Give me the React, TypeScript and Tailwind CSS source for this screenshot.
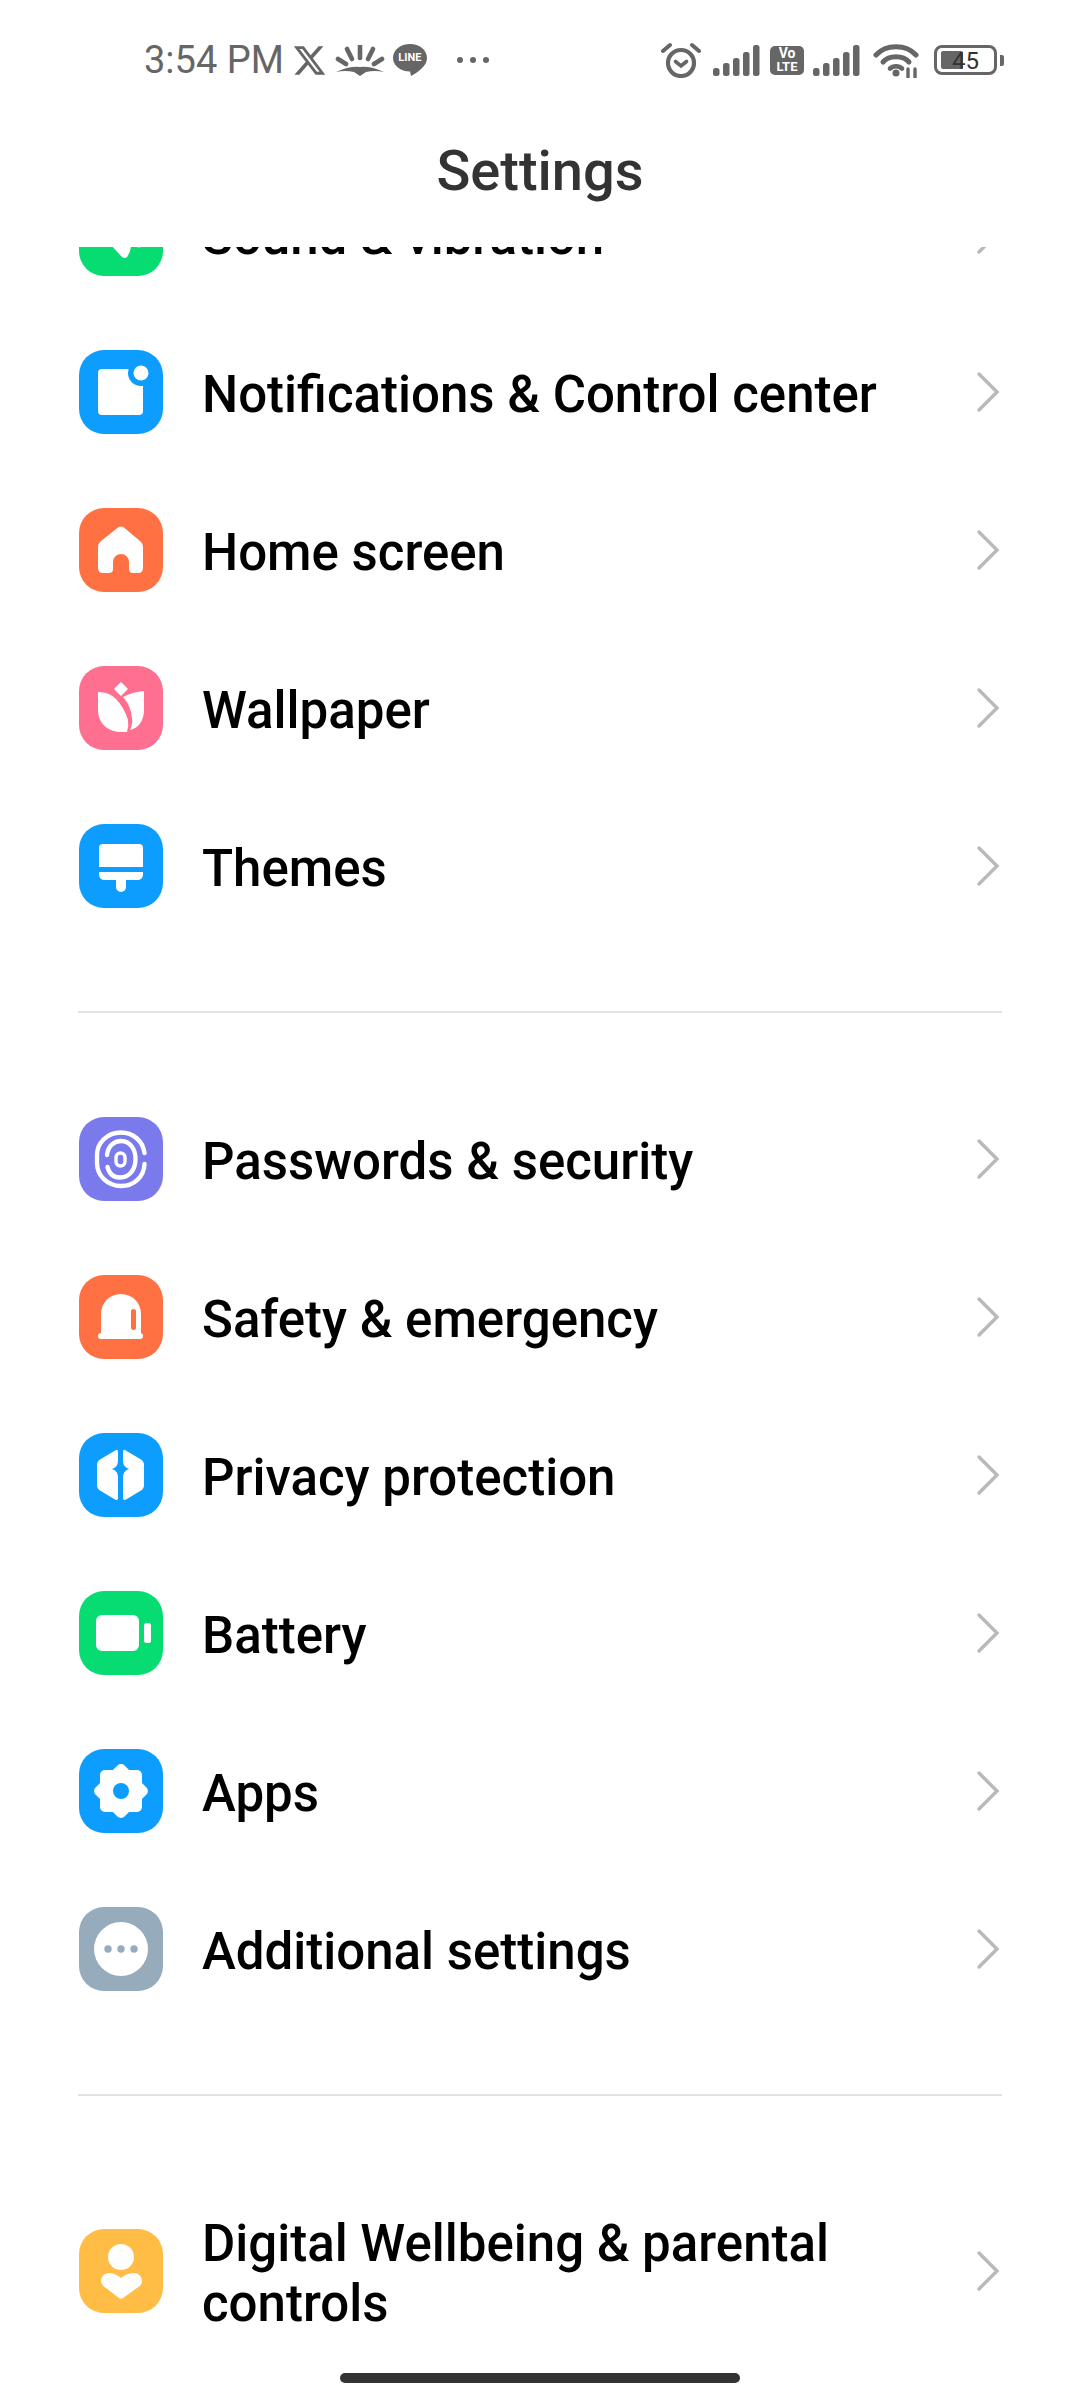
import React from "react";
import { FaXTwitter } from "react-icons/fa6";

const W = "#ffffff";

function Ico({ bg, children }: { bg: string; children: React.ReactNode }) {
  return (
    <div className={`w-[84px] h-[84px] rounded-[25px] shrink-0 overflow-hidden ${bg}`}>
      <svg width="84" height="84" viewBox="0 0 84 84">{children}</svg>
    </div>
  );
}

const Sound = () => (
  <Ico bg="bg-[#07dc73]">
    <path d="M31 52 L43 65 Q46 67 48 65 Q52 60 53 48 Z" fill={W} />
    <circle cx="60" cy="50" r="5.5" fill={W} />
  </Ico>
);
const Notif = () => (
  <Ico bg="bg-[#0d9dff]">
    <rect x="19" y="19" width="45" height="46" rx="4" fill={W} />
    <circle cx="62" cy="23" r="13" fill="#0d9dff" />
    <circle cx="62" cy="23" r="7.5" fill={W} />
  </Ico>
);
const Home = () => (
  <Ico bg="bg-[#ff7043]">
    <path
      fillRule="evenodd"
      d="M39 19.5 Q42 17.5 45 19.5 L61 33 Q64 35.5 64 39 V60 Q64 65 59 65 H54 Q50 65 50 61 V54 A8 8 0 0 0 34 54 V61 Q34 65 30 65 H24 Q19 65 19 60 V39 Q19 35.5 22 33 Z"
      fill={W}
    />
  </Ico>
);
const Wall = () => (
  <Ico bg="bg-[#ff6f8f]">
    <path d="M42 17 L48 23 L42 29 L36 23 Z" fill={W} strokeLinejoin="round" stroke={W} strokeWidth="1.5" />
    <path d="M20 26 Q30 26 37 33 Q45 41 49 54 Q50 60 48 66 H42 C28 66 19 56 19 44 V27 Q19 25.5 20 26 Z" fill={W} />
    <path d="M64 25 Q54 26 44 31 Q52 40 53 52 Q54 58 51 64 C60 62 65 54 65 44 V26 Q65 25 64 25 Z" fill={W} />
  </Ico>
);
const Themes = () => (
  <Ico bg="bg-[#0d9dff]">
    <path d="M24 20 H60 Q64 20 64 24 V43 H20 V24 Q20 20 24 20 Z" fill={W} />
    <path d="M20 48 H64 V50 Q64 56 58 56 H47 V63 A5 5 0 0 1 37 63 V56 H26 Q20 56 20 50 Z" fill={W} />
  </Ico>
);
const Pass = () => (
  <Ico bg="bg-[#7a7aec]">
    <g fill="none" stroke={W} strokeLinecap="round">
      <path d="M65.5 36 C64 24 54 15.5 42 15.5 C28 15.5 18 26 18 38 V46 C18 59 29 69 42 69 C55 69 65 60 65.5 47" strokeWidth="4.4" />
      <path d="M28 38 C29 29 35 24 42 24 C51 24 56.5 32 56.5 42 C56.5 53 50 60.5 41 60.5 C34 60.5 30 56 28.5 50" strokeWidth="4.4" />
      <rect x="37" y="36" width="9" height="13" rx="4.5" strokeWidth="3.4" />
    </g>
  </Ico>
);
const Safety = () => (
  <Ico bg="bg-[#ff7043]">
    <path d="M22 59 V39 A20 20 0 0 1 62 39 V59 Z" fill={W} />
    <rect x="19" y="58" width="45" height="6" rx="3" fill={W} />
    <rect x="52" y="34" width="5" height="21" rx="2.5" fill="#ff7043" />
  </Ico>
);
const PrivHalf = () => (
  <path
    d="M37 17 L21 26.5 Q18 28.5 18 32 V52 Q18 55.5 21 57.5 L36 66.5 Q39 68 39 65 V44 Q39 38 33 36 Q39 34 39 28 V19 Q39 16 37 17 Z"
    fill={W}
  />
);
const Privacy = () => (
  <Ico bg="bg-[#0d9dff]">
    <PrivHalf />
    <g transform="translate(83 0) scale(-1 1)">
      <PrivHalf />
    </g>
  </Ico>
);
const Battery = () => (
  <Ico bg="bg-[#07dc73]">
    <rect x="17" y="24" width="43" height="36" rx="6" fill={W} />
    <rect x="65" y="32" width="7" height="20" rx="2.5" fill={W} />
  </Ico>
);
const Apps = () => (
  <Ico bg="bg-[#0d9dff]">
    <rect x="21" y="21" width="42" height="42" rx="5" fill={W} />
    <rect x="21.5" y="21.5" width="41" height="41" rx="5" fill={W} transform="rotate(45 42 42)" />
    <circle cx="42" cy="42" r="8" fill="#0d9dff" />
  </Ico>
);
const Additional = () => (
  <Ico bg="bg-[#96abbb]">
    <circle cx="42" cy="42" r="27" fill={W} />
    <circle cx="29" cy="42" r="3.7" fill="#96abbb" />
    <circle cx="42" cy="42" r="3.7" fill="#96abbb" />
    <circle cx="55" cy="42" r="3.7" fill="#96abbb" />
  </Ico>
);
const Digital = () => (
  <Ico bg="bg-[#ffbd45]">
    <circle cx="42" cy="28" r="13" fill={W} />
    <path d="M42 49 Q36 44 30 44 C25 44 22 48 22 52 Q22 56 27 59 L40 69 Q42 70.5 44 69 L58 59 Q63 56 63 52 C63 48 60 44 55 44 Q48 44 42 49 Z" fill={W} />
  </Ico>
);

const Chevron = () => (
  <svg width="24" height="42" viewBox="0 0 24 42" className="shrink-0" fill="none">
    <path d="M3 3 L21 21 L3 39" stroke="#b9b9b9" strokeWidth="3.4" strokeLinecap="round" strokeLinejoin="miter" />
  </svg>
);

function Row({ icon, label, tall }: { icon: React.ReactNode; label: React.ReactNode; tall?: boolean }) {
  return (
    <div className={`flex items-center pl-[79px] pr-[80px] ${tall ? "h-[216px]" : "h-[158px]"}`}>
      {icon}
      <div className="flex-1 ml-[39px] pr-[60px] pt-[5px] text-[51px] leading-[60px] font-medium text-black">{label}</div>
      <Chevron />
    </div>
  );
}

const Divider = () => <div className="mx-[78px] mt-[66px] mb-[67px] h-[2px] bg-[#e2e2e2]" />;

const Signal = () => (
  <svg width="47" height="31" viewBox="0 0 47 31" fill="#666666">
    <rect x="0" y="23" width="6.5" height="8" rx="2.5" />
    <rect x="10" y="18" width="6.5" height="13" rx="2.5" />
    <rect x="20" y="13" width="6.5" height="18" rx="2.5" />
    <rect x="30" y="7" width="6.5" height="24" rx="2.5" />
    <rect x="40" y="0" width="6.5" height="31" rx="2.5" />
  </svg>
);

function StatusBar() {
  return (
    <div className="h-[120px] shrink-0 flex items-center justify-between pl-[144px] pr-[76px] text-[#666666]">
      <div className="flex items-center">
        <span className="text-[38px] leading-[44px]">3:54 PM</span>
        <FaXTwitter className="ml-[8px] text-[#666666]" size={35} />
        <svg width="50" height="31" viewBox="0 0 50 31" className="ml-[8px]" fill="none" stroke="#666666" strokeLinecap="round">
          <path d="M25 1 V13" strokeWidth="4.6" />
          <path d="M12 4 L17 14" strokeWidth="4.6" />
          <path d="M38 4 L33 14" strokeWidth="4.6" />
          <path d="M3 14 L11 19" strokeWidth="4.6" />
          <path d="M47 14 L39 19" strokeWidth="4.6" />
          <path d="M1 27 Q14 21 25 22 Q36 21 49 27 Q40 25 31 27 L25 31 L19 27 Q10 25 1 27 Z" fill="#666666" stroke="none" />
        </svg>
        <div className="relative ml-[8px] w-[34px] h-[32px]">
          <svg width="34" height="32" viewBox="0 0 34 32" fill="#666666">
            <path d="M17 0 C26.5 0 34 6 34 14 C34 22 25 28 18 32 L17 27.5 C7.5 27.5 0 21.5 0 14 C0 6 7.5 0 17 0 Z" />
          </svg>
          <span className="absolute left-0 right-0 top-[8px] text-center text-[11px] leading-[12px] font-bold text-white">LINE</span>
        </div>
        <div className="flex gap-[7px] ml-[30px]">
          <span className="w-[6px] h-[6px] rounded-full bg-[#666666]" />
          <span className="w-[6px] h-[6px] rounded-full bg-[#666666]" />
          <span className="w-[6px] h-[6px] rounded-full bg-[#666666]" />
        </div>
      </div>
      <div className="flex items-center">
        <svg width="40" height="36" viewBox="0 0 40 36" fill="none" stroke="#666666" strokeLinecap="round">
          <circle cx="20" cy="21" r="13" strokeWidth="4.2" />
          <path d="M14.5 19.5 L20 24 L25.5 19.5" strokeWidth="3.6" />
          <path d="M2 9 L9 3" strokeWidth="4" />
          <path d="M38 9 L31 3" strokeWidth="4" />
        </svg>
        <div className="ml-[12px]"><Signal /></div>
        <div className="ml-[10px] w-[34px] h-[29px] rounded-[5px] bg-[#666666] flex flex-col items-center justify-center text-white font-bold">
          <span className="text-[14px] leading-[13px]">Vo</span>
          <span className="text-[13px] leading-[13px]">LTE</span>
        </div>
        <div className="ml-[9px]"><Signal /></div>
        <svg width="47" height="36" viewBox="0 0 47 36" className="ml-[13px]" fill="none" stroke="#666666" strokeLinecap="round">
          <path d="M3 13 C13 2 33 2 43 13" strokeWidth="5" />
          <path d="M10 20 C16 13 30 13 36 20" strokeWidth="5" />
          <path d="M17 26.5 C20 23.5 26 23.5 29 26.5" strokeWidth="4.6" />
          <circle cx="23" cy="31" r="3.5" fill="#666666" stroke="none" />
          <path d="M35 27 V35 M42 27 V35" strokeWidth="3.4" />
        </svg>
        <div className="ml-[14px] relative w-[63px] h-[30px] rounded-[8px] border-[3px] border-[#666666] flex items-center">
          <div className="ml-[4px] w-[22px] h-[18px] rounded-[2px] bg-[#666666]" />
          <span className="absolute left-[15px] top-[1px] text-[24px] leading-[24px] text-[#333333]">45</span>
        </div>
        <div className="ml-[3px] w-[4px] h-[11px] rounded-r-[2px] bg-[#666666]" />
      </div>
    </div>
  );
}

export default function App() {
  return (
    <div
      className="relative w-[1080px] h-[2400px] overflow-hidden bg-white flex flex-col"
      style={{ fontFamily: "Roboto, sans-serif" }}
    >
      <StatusBar />
      <div className="h-[127px] shrink-0 flex justify-center pt-[21px] text-[56px] leading-[60px] font-medium text-[#333333]">
        Settings
      </div>
      <div className="flex-1 overflow-hidden">
        <div className="-mt-[92px]">
          <Row icon={<Sound />} label="Sound & vibration" />
          <Row icon={<Notif />} label="Notifications & Control center" />
          <Row icon={<Home />} label="Home screen" />
          <Row icon={<Wall />} label="Wallpaper" />
          <Row icon={<Themes />} label="Themes" />
          <Divider />
          <Row icon={<Pass />} label="Passwords & security" />
          <Row icon={<Safety />} label="Safety & emergency" />
          <Row icon={<Privacy />} label="Privacy protection" />
          <Row icon={<Battery />} label="Battery" />
          <Row icon={<Apps />} label="Apps" />
          <Row icon={<Additional />} label="Additional settings" />
          <Divider />
          <Row tall icon={<Digital />} label="Digital Wellbeing & parental controls" />
        </div>
      </div>
      <div className="absolute left-[340px] top-[2373px] w-[400px] h-[10px] rounded-full bg-[#333333]" />
    </div>
  );
}
